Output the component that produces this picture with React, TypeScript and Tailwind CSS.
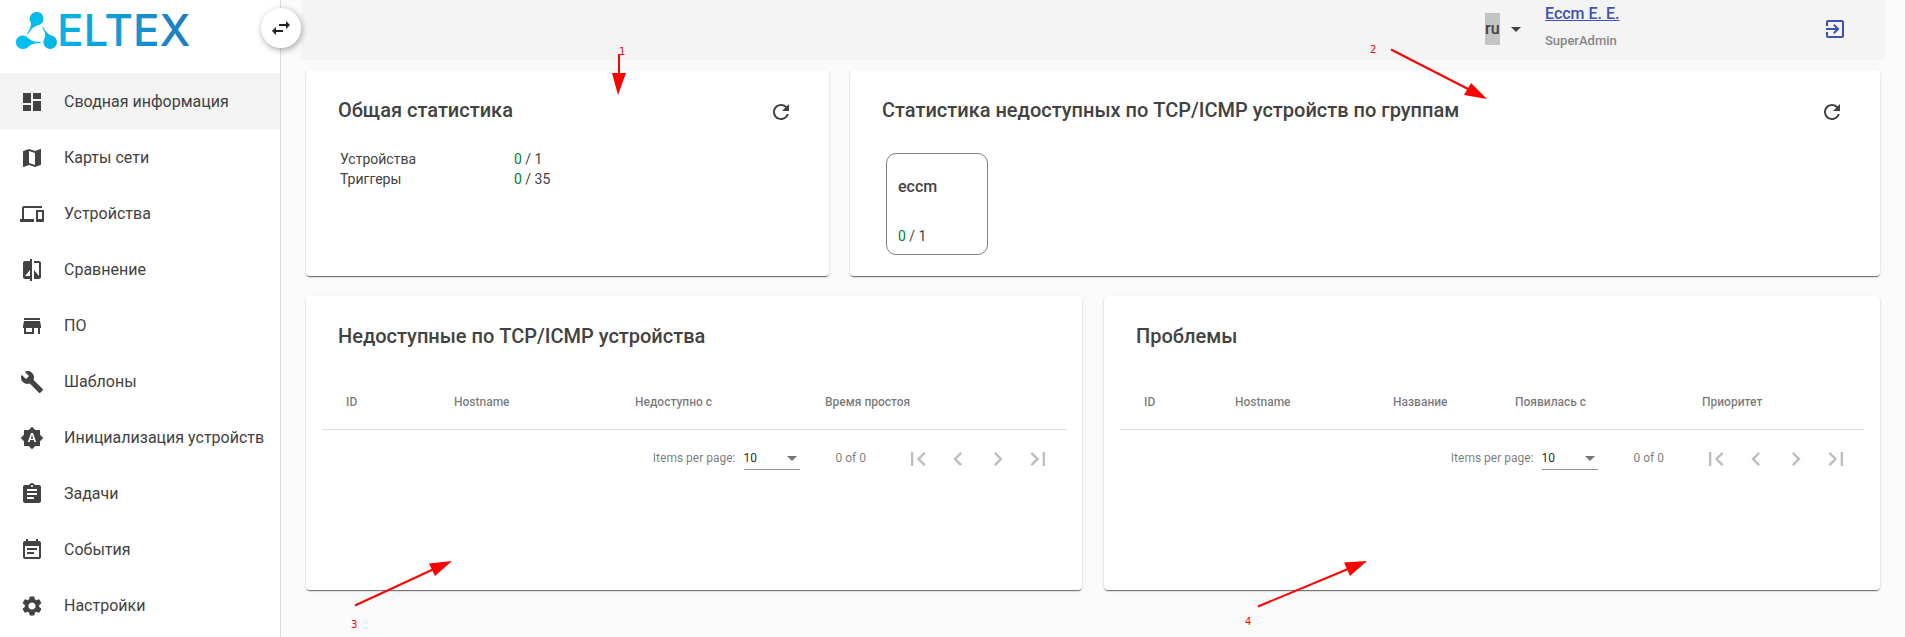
import React from "react";
import type { IconType } from "react-icons";
import {
  MdArrowDropDown,
  MdAssignment,
  MdBrightnessAuto,
  MdBuild,
  MdChevronLeft,
  MdChevronRight,
  MdCompare,
  MdDashboard,
  MdDevices,
  MdEventNote,
  MdExitToApp,
  MdFirstPage,
  MdLastPage,
  MdMap,
  MdRefresh,
  MdSettings,
  MdStore,
  MdSwapHoriz,
} from "react-icons/md";

const menu: { label: string; icon: IconType }[] = [
  { label: "Сводная информация", icon: MdDashboard },
  { label: "Карты сети", icon: MdMap },
  { label: "Устройства", icon: MdDevices },
  { label: "Сравнение", icon: MdCompare },
  { label: "ПО", icon: MdStore },
  { label: "Шаблоны", icon: MdBuild },
  { label: "Инициализация устройств", icon: MdBrightnessAuto },
  { label: "Задачи", icon: MdAssignment },
  { label: "События", icon: MdEventNote },
  { label: "Настройки", icon: MdSettings },
];

const deviceColumns = [
  { title: "ID", width: "w-[132px]" },
  { title: "Hostname", width: "w-[181px]" },
  { title: "Недоступно с", width: "w-[190px]" },
  { title: "Время простоя", width: "w-[241px]" },
];

const problemColumns = [
  { title: "ID", width: "w-[115px]" },
  { title: "Hostname", width: "w-[158px]" },
  { title: "Название", width: "w-[122px]" },
  { title: "Появилась с", width: "w-[187px]" },
  { title: "Приоритет", width: "w-[162px]" },
];

const Logo = () => (
  <svg width="200" height="60" viewBox="0 0 200 60" role="img" aria-label="Eltex">
    <defs>
      <linearGradient id="logo" gradientUnits="userSpaceOnUse" x1="0" y1="0" x2="178" y2="0">
        <stop offset="0" stopColor="#00c3f0" />
        <stop offset="0.4" stopColor="#0aa9de" />
        <stop offset="1" stopColor="#2079bf" />
      </linearGradient>
    </defs>
    <g fill="url(#logo)">
      <g transform="translate(0 8)">
        <path d="M20.5 0a6.8 6.8 0 0 1 2.6 13.1C18 14.2 15.5 17 11.8 22.5l-.9-.5C13.5 17.5 15.8 13.5 14.6 10.2A6.8 6.8 0 0 1 20.5 0z" />
        <path d="M6.6 23.5c3.6 0 5.4 2.4 8 4.6 2.4 1.6 5.4 1.9 10 1.7v1.4c-4.6-.2-7.6.2-10 1.8-2.4 2-4.4 4-8 4a6.7 6.7 0 0 1 0-13.5z" />
        <path d="M34.2 37a6.7 6.7 0 0 1-5.8-10.2c1.8-3.4.6-6.800-2.300-11.200l.9-.6c2.700 4.600 4.800 7.300 8.300 8.500A6.800 6.800 0 0 1 34.200 37z" />
      </g>
      <text x="41" y="42" fontSize="44" fontWeight="500" fontFamily="Inter, sans-serif">
        ELTEX
      </text>
    </g>
  </svg>
);

const Sidebar = () => {
  return (
    <aside className="relative w-[281px] shrink-0 border-r border-[#dcdcdc] bg-white">
      <div className="h-[73px] pt-1 pl-4">
        <Logo />
      </div>
      <button
        aria-label="Свернуть меню"
        className="absolute top-2 -right-[21px] z-10 flex h-10 w-10 items-center justify-center rounded-full bg-white text-[#212121] shadow-[1px_2px_6px_rgba(0,0,0,0.35)]"
      >
        <MdSwapHoriz size={24} />
      </button>
      <nav className="flex flex-col">
        {menu.map(({ label, icon: Icon }, i) => (
          <a
            key={label}
            href="#"
            className={`flex h-14 items-center gap-5 pt-0.5 pl-5 whitespace-nowrap ${i === 0 ? "bg-[#f4f4f4]" : ""}`}
          >
            <Icon size={24} />
            {label}
          </a>
        ))}
      </nav>
    </aside>
  );
};

const Header = () => {
  return (
    <header className="flex h-[60px] items-center bg-[#f4f4f4] pb-0.5">
      <div className="ml-auto flex w-[60px] items-center">
        <select
          aria-label="Язык"
          defaultValue="ru"
          className="h-8 w-[15px] appearance-none bg-[#c4c4c4] font-medium"
        >
          <option value="ru">ru</option>
          <option value="en">en</option>
        </select>
        <MdArrowDropDown size={24} className="ml-1" />
      </div>
      <div className="flex h-full w-[278px] flex-col font-medium">
        <a href="#" className="leading-7 text-[#3f51b5] underline">
          Eccm E. E.
        </a>
        <span className="text-[13px] leading-[26px] text-[#868686]">SuperAdmin</span>
      </div>
      <button aria-label="Выход" className="mr-[38px] text-[#3f51b5]">
        <MdExitToApp size={24} />
      </button>
    </header>
  );
};

const Card = ({
  title,
  refresh,
  children,
}: {
  title: string;
  refresh?: boolean;
  children: React.ReactNode;
}) => {
  return (
    <section className="rounded-[4px] bg-white px-4 pt-4 shadow-[0_2px_1px_-1px_rgba(0,0,0,0.4),0_1px_1px_0_rgba(0,0,0,0.2),0_1px_3px_0_rgba(0,0,0,0.12)]">
      <div className="flex h-12 items-center justify-between px-4">
        <h2 className="text-xl font-medium">{title}</h2>
        {refresh && (
          <button aria-label="Обновить" className="mr-1 pt-1">
            <MdRefresh size={24} />
          </button>
        )}
      </div>
      {children}
    </section>
  );
};

const Ratio = ({ value, total }: { value: number; total: number }) => (
  <>
    <span className="text-[#00802b]">{value}</span> / {total}
  </>
);

const Paginator = ({ id }: { id: string }) => {
  return (
    <div className="flex h-14 items-center justify-end pr-2 text-xs text-black/54">
      <label htmlFor={id}>Items per page:</label>
      <div className="relative ml-2 h-6 w-14 border-b border-black/42">
        <select id={id} defaultValue="10" className="h-6 w-full appearance-none text-black/87">
          <option>10</option>
          <option>25</option>
          <option>50</option>
        </select>
        <MdArrowDropDown size={24} className="pointer-events-none absolute top-0 -right-1" />
      </div>
      <span className="mr-8 ml-9">0 of 0</span>
      <div className="flex pt-0.5 text-black/26">
        <button disabled aria-label="First page" className="flex h-10 w-10 items-center justify-center">
          <MdFirstPage size={28} />
        </button>
        <button disabled aria-label="Previous page" className="flex h-10 w-10 items-center justify-center">
          <MdChevronLeft size={28} />
        </button>
        <button disabled aria-label="Next page" className="flex h-10 w-10 items-center justify-center">
          <MdChevronRight size={28} />
        </button>
        <button disabled aria-label="Last page" className="flex h-10 w-10 items-center justify-center">
          <MdLastPage size={28} />
        </button>
      </div>
    </div>
  );
};

const DataTable = ({ id, columns }: { id: string; columns: { title: string; width: string }[] }) => {
  return (
    <div className="pt-4">
      <table className="w-full table-fixed border-collapse">
        <thead>
          <tr className="h-[53px] border-b border-black/12 text-left text-xs text-black/54">
            {columns.map((col) => (
              <th key={col.title} className={`p-0 font-medium first:pl-6 ${col.width}`}>
                {col.title}
              </th>
            ))}
          </tr>
        </thead>
      </table>
      <Paginator id={id} />
    </div>
  );
};

const Callouts = () => (
  <svg className="pointer-events-none absolute top-0 left-0 z-20" width="1905" height="637" viewBox="0 0 1905 637">
    <g stroke="#f00" strokeWidth="2">
      <line x1="619" y1="54" x2="619" y2="75" />
      <line x1="1391" y1="49.5" x2="1470" y2="90" />
      <line x1="355" y1="605.5" x2="434" y2="569" />
      <line x1="1258" y1="606.5" x2="1348" y2="569" />
    </g>
    <g fill="#f00">
      <polygon points="612,73 626,73 618,95" />
      <polygon points="1471,83 1464,95 1487,99" />
      <polygon points="429,563.5 435,576 452,561" />
      <polygon points="1344,562.5 1350,576 1367,561" />
    </g>
    <g fill="#f00" fontSize="10" fontFamily="DejaVu Sans, sans-serif">
      <text x="619" y="55">1</text>
      <text x="1370" y="53">2</text>
      <text x="351" y="628">3</text>
      <text x="1245" y="625">4</text>
    </g>
  </svg>
);

const App = () => {
  return (
    <div className="relative flex min-h-screen overflow-hidden bg-[#fafafa] font-[Roboto,sans-serif] text-base text-[#424242]">
      <Sidebar />
      <div className="min-w-0 flex-1 px-5">
        <Header />
        <main className="flex flex-col gap-5 px-[5px] pt-[10px]">
          <div className="grid min-h-[206px] grid-cols-[523fr_1030fr] gap-[21px]">
            <Card title="Общая статистика" refresh>
              <dl className="grid grid-cols-[174px_1fr] px-[18px] pt-[15px] text-sm">
                <dt>Устройства</dt>
                <dd>
                  <Ratio value={0} total={1} />
                </dd>
                <dt>Триггеры</dt>
                <dd>
                  <Ratio value={0} total={35} />
                </dd>
              </dl>
            </Card>
            <Card title="Статистика недоступных по TCP/ICMP устройств по группам" refresh>
              <div className="mt-[19px] ml-5 flex h-[102px] w-[102px] flex-col justify-between rounded-[10px] border border-[#808080] px-[11px] pt-[21px] pb-2">
                <h3 className="font-medium">eccm</h3>
                <p className="text-sm">
                  <Ratio value={0} total={1} />
                </p>
              </div>
            </Card>
          </div>
          <div className="grid min-h-[294px] grid-cols-2 gap-[22px]">
            <Card title="Недоступные по TCP/ICMP устройства">
              <DataTable id="devices-size" columns={deviceColumns} />
            </Card>
            <Card title="Проблемы">
              <DataTable id="problems-size" columns={problemColumns} />
            </Card>
          </div>
        </main>
      </div>
      <Callouts />
    </div>
  );
};

export default App;
